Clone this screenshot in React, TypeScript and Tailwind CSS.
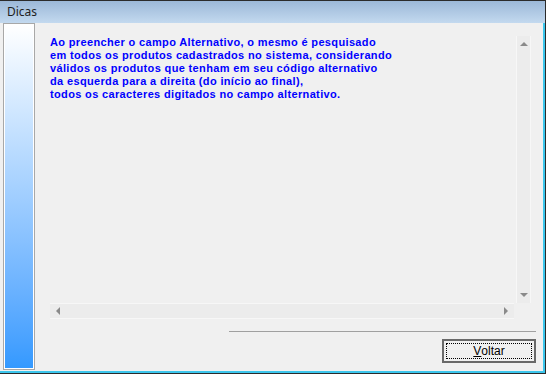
export default function App() {
    return (
        <div className="w-[546px] h-[374px] flex flex-col bg-[#f0f0f0] border-t border-r border-b border-[#2b2b2b] overflow-hidden">
            <div className="h-[22px] shrink-0 bg-gradient-to-b from-[#9cb8d8] to-[#c3d9ef] flex items-center pl-[7px] font-['Noto_Sans',sans-serif] text-[12px] text-[#1e1e1e]">
                Dicas
            </div>
            <div className="flex flex-1 min-h-0 border-r-2 border-b-2 border-[#3cc6ec]">
                <div className="ml-[3px] mb-[1px] w-[32px] border border-[#a8a8a8] p-[1px] bg-white">
                    <div className="h-full bg-gradient-to-b from-white to-[#3399ff]" />
                </div>
                <div className="flex flex-col flex-1 pl-[15px] pr-[7px] pt-[13px]">
                    <div className="flex flex-col w-[481px] h-[283px]">
                        <div className="flex flex-1 min-h-0">
                            <div className="flex-1 font-['Liberation_Sans',Arial,sans-serif] font-bold text-[11px] leading-[13px] tracking-[0.35px] text-[#0000ff]">
                                <p>Ao preencher o campo Alternativo, o mesmo é pesquisado</p>
                                <p>em todos os produtos cadastrados no sistema, considerando</p>
                                <p>válidos os produtos que tenham em seu código alternativo</p>
                                <p>da esquerda para a direita (do início ao final),</p>
                                <p>todos os caracteres digitados no campo alternativo.</p>
                            </div>
                            <div className="w-[15px] ml-[2px] flex flex-col justify-between items-center bg-[#ececec] border-l border-r border-[#f7f7f7] py-[6px]">
                                <span className="w-0 h-0 border-l-[4px] border-r-[4px] border-b-[4px] border-l-transparent border-r-transparent border-b-[#8a8a8a]" />
                                <span className="w-0 h-0 border-l-[4px] border-r-[4px] border-t-[4px] border-l-transparent border-r-transparent border-t-[#8a8a8a]" />
                            </div>
                        </div>
                        <div className="flex h-[16px]">
                            <div className="w-[464px] flex justify-between items-center bg-[#ececec] border-t border-b border-[#f7f7f7] px-[6px]">
                                <span className="w-0 h-0 border-t-[4px] border-b-[4px] border-r-[4px] border-t-transparent border-b-transparent border-r-[#8a8a8a]" />
                                <span className="w-0 h-0 border-t-[4px] border-b-[4px] border-l-[4px] border-t-transparent border-b-transparent border-l-[#8a8a8a]" />
                            </div>
                        </div>
                    </div>
                    <div className="mt-[12px] self-end w-[307px] h-[1px] bg-[#a0a0a0]" />
                    <button className="mt-[7px] self-end w-[94px] h-[24px] border-2 border-[#696969] bg-[#f0f0f0] p-[2px] font-['Liberation_Sans',Arial,sans-serif] text-[12px] text-black">
                        <span className="flex items-center justify-center w-full h-full border border-dotted border-black">
                            <span className="underline">V</span>oltar
                        </span>
                    </button>
                </div>
            </div>
        </div>
    );
}
